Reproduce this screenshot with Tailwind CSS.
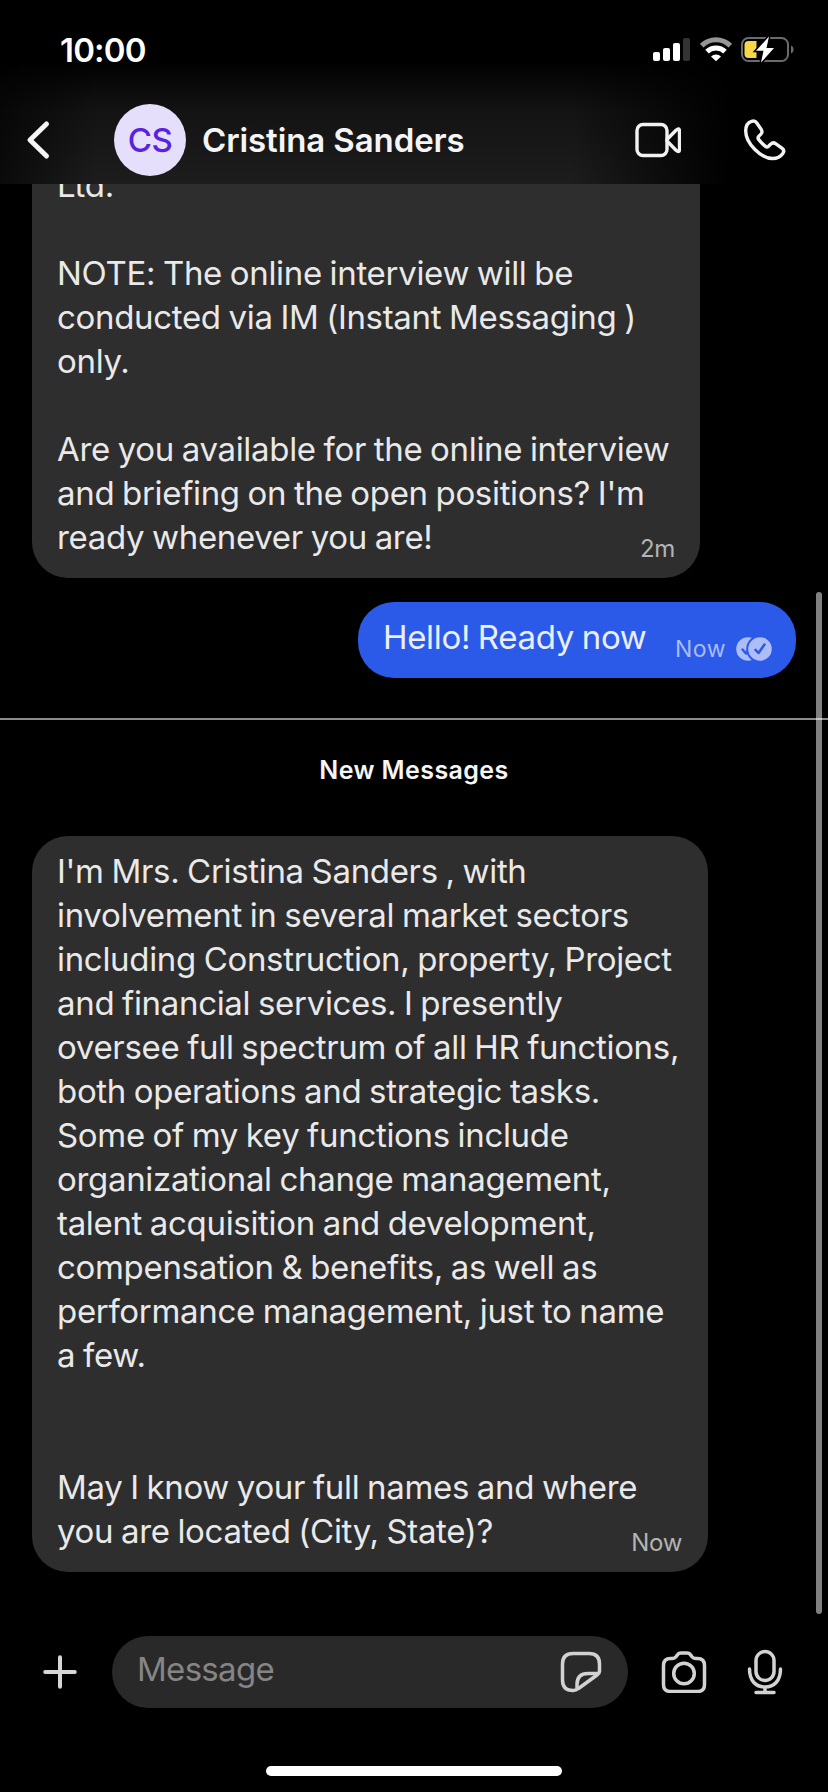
<!DOCTYPE html>
<html lang="en">
<head>
  <meta charset="UTF-8" />
  <meta name="viewport" content="width=device-width, initial-scale=1.0"/>
  <title>Cristina Sanders</title>
  <script src="https://cdn.jsdelivr.net/npm/@tailwindcss/browser@4"></script>
</head>
<body class="bg-black overflow-hidden font-['Inter',sans-serif] text-[#e9e9e9]">
  <div class="relative w-[828px] h-[1792px] flex flex-col overflow-hidden">

    <!-- Header -->
    <header class="h-[184px] shrink-0 bg-[linear-gradient(to_right,rgba(0,0,0,0.65),transparent_100px,transparent_570px,#000_730px),linear-gradient(to_bottom,#000_60px,#131313_110px,#1d1d1d_184px)]">
      <div class="h-[104px] flex justify-between pl-[60px] pr-[33px]">
        <div class="pt-[30px] text-[33px] leading-[40px] font-semibold text-white tracking-[-0.8px]">10:00</div>
        <div class="pt-[36px] flex items-start">
          <svg class="w-[38px] h-[28px]" viewBox="0 0 38 28" fill="#fff">
            <rect x="0" y="16" width="7" height="9" rx="2"/>
            <rect x="10" y="12" width="7" height="13" rx="2"/>
            <rect x="20" y="7" width="7" height="18" rx="2"/>
            <rect x="30" y="2" width="7" height="23" rx="2" fill="#333"/>
          </svg>
          <svg class="w-[32px] h-[28px] ml-[9px]" viewBox="0 0 32 28" fill="none" stroke-width="5">
            <path d="M1.7 9.7a20.2 20.2 0 0 1 28.6 0" stroke="#969696"/>
            <path d="M7 15.6a12.8 12.8 0 0 1 18 0" stroke="#fff"/>
            <path d="M11 20.4a7.2 7.2 0 0 1 10 0l-5 4.8z" fill="#fff"/>
          </svg>
          <svg class="w-[54px] h-[28px] ml-[9px]" viewBox="0 0 54 28" fill="none">
            <rect x="1" y="2" width="46" height="23" rx="6.5" stroke="#6b6b6b" stroke-width="2"/>
            <path d="M50 9.500c3.400 1.300 3.400 6.700 0 8z" fill="#6b6b6b"/>
            <path d="M7.500 5H15.500v17H7.500a4 4 0 0 1-4-4V9a4 4 0 0 1 4-4z" fill="#f8d64a"/>
            <path d="M28 .5 15 14.700h7.500L20 26.500l13-14.500h-7.500z" fill="#fff" stroke="#000" stroke-width="3" paint-order="stroke"/>
          </svg>
        </div>
      </div>
      <div class="h-[72px] flex items-center pl-[25px] pr-[42px]">
        <svg class="w-[26px] h-[40px]" viewBox="0 0 26 40" fill="none" stroke="#f5f5f5" stroke-width="5" stroke-linecap="round" stroke-linejoin="round">
          <path d="M21.500 4 5 20l16.500 16"/>
        </svg>
        <div class="ml-[63px] w-[72px] h-[72px] pt-0.5 rounded-full bg-[#e6dffb] flex items-center justify-center text-[33px] font-medium text-[#5a22e0] tracking-[-0.5px]">CS</div>
        <div class="ml-[16px] text-[33px] leading-[40px] font-semibold text-[#f5f5f5] tracking-[-0.1px]">Cristina Sanders</div>
        <svg class="ml-auto w-[46px] h-[36px]" viewBox="0 0 46 36" fill="none" stroke="#f2f2f2" stroke-width="3.4" stroke-linejoin="round">
          <rect x="2" y="2.500" width="30" height="31" rx="6"/>
          <path d="M32 17.500 41 8.200q3.500-3 3.500 1v18q0 4-3.500 1L32 19z"/>
        </svg>
        <svg class="ml-[63px] w-[42px] h-[42px]" viewBox="0 0 42 42" fill="none" stroke="#f2f2f2" stroke-width="3.4" stroke-linejoin="round">
          <path d="M7.500 2.400C4 3.500 1.700 7 1.700 12c0 12 15 27.500 27 27.500 4.800 0 8-2 10.300-5.300 1.200-1.900.8-3.600-.8-4.800l-6.600-4.700c-1.700-1.200-3.400-1-4.800.4l-2.300 2.200c-1 .9-2 .9-3 .1-2.600-2-4.900-4.400-6.900-7-.8-1.100-.8-2 .1-3l2.200-2.300c1.300-1.400 1.400-3 .3-4.700L12.800 4c-1.200-1.800-3.200-2.400-5.300-1.600z"/>
        </svg>
      </div>
    </header>

    <!-- Conversation -->
    <main class="flex flex-col h-[1388px] shrink-0 text-[33px] leading-[44px] tracking-[-0.32px] [word-spacing:-1.2px]">
      <div class="ml-[32px] w-[668px] h-[394px] shrink-0 overflow-hidden flex flex-col justify-end rounded-b-[36px] bg-[#2e2e2e] pl-[25px] pr-[25px] pb-[19px] whitespace-nowrap">
        <p>Ltd.<br><br>NOTE: The online interview will be<br>conducted via IM (Instant Messaging )<br>only.<br><br>Are you available for the online interview<br>and briefing on the open positions? I'm</p>
        <div class="flex justify-between items-end">
          <p>ready whenever you are!</p>
          <span class="-mb-1 text-[24px] leading-[28px] text-[#b3b3b3]">2m</span>
        </div>
      </div>

      <div class="mt-[24px] mr-[32px] self-end w-[438px] h-[76px] shrink-0 rounded-[36px] bg-[#2c5ae8] pt-[13px] pl-[25px] pr-[24px] flex items-start justify-between whitespace-nowrap text-[#e9eefc]">
        <p>Hello! Ready now</p>
        <div class="mt-[20px] flex items-center text-[23px] leading-[28px] text-[#a9bcf6]">
          <span class="tracking-[0.5px]">Now</span>
          <svg class="ml-[10px] w-[36px] h-[24px]" viewBox="0 0 36 24" fill="none" stroke-width="2.500" stroke-linecap="round" stroke-linejoin="round">
            <circle cx="12" cy="12" r="11.800" fill="#adbdf7"/>
            <path d="M6.500 12.500 10 16.500l6-9" stroke="#2c5ae8"/>
            <circle cx="24" cy="12" r="12.800" fill="#adbdf7" stroke="#2c5ae8" stroke-width="2"/>
            <path d="M19.500 12.800 22.500 16l6-8.500" stroke="#2c5ae8"/>
          </svg>
        </div>
      </div>

      <div class="mt-[40px] h-[2px] shrink-0 bg-[#8c8c8c]"></div>
      <div class="h-[116px] shrink-0 pt-[32px] text-center text-[25px] leading-[36px] font-semibold text-[#f5f5f5] tracking-[0.4px] [word-spacing:0px]">New Messages</div>

      <div class="ml-[32px] w-[676px] h-[736px] shrink-0 rounded-[36px] bg-[#2e2e2e] pt-[13px] pl-[25px] pr-[26px] whitespace-nowrap">
        <p>I'm Mrs. Cristina Sanders , with<br>involvement in several market sectors<br>including Construction, property, Project<br>and financial services. I presently<br>oversee full spectrum of all HR functions,<br>both operations and strategic tasks.<br>Some of my key functions include<br>organizational change management,<br>talent acquisition and development,<br>compensation &amp; benefits, as well as<br>performance management, just to name<br>a few.<br><br><br>May I know your full names and where</p>
        <div class="flex justify-between items-end">
          <p>you are located (City, State)?</p>
          <span class="-mb-1 text-[24px] leading-[28px] text-[#b3b3b3]">Now</span>
        </div>
      </div>
    </main>

    <!-- Composer -->
    <footer class="flex flex-col items-center pt-[64px]">
      <div class="w-full h-[72px] flex items-center pl-[42px] pr-[45px]">
        <svg class="w-[36px] h-[36px]" viewBox="0 0 36 36" fill="none" stroke="#d6d6d6" stroke-width="4" stroke-linecap="round">
          <path d="M18 3.200v29.600M3.200 18h29.600"/>
        </svg>
        <div class="ml-[34px] w-[516px] h-[72px] rounded-full bg-[#292929] flex items-center justify-between pl-[25px] pr-[26px]">
          <span class="pb-[6px] text-[33px] leading-[44px] text-[#858585] tracking-[-0.7px]">Message</span>
          <svg class="w-[42px] h-[42px]" viewBox="0 0 42 42" fill="none" stroke="#d2d2d2" stroke-width="3.5" stroke-linejoin="round">
            <path d="M39.500 20.500V13Q39.500 2.500 29 2.500H13Q2.500 2.500 2.500 13v16Q2.500 39.500 13 39.500q3 0 5.500-2L37 24q2.500-1.700 2.500-3.500z"/>
            <path d="M17 38.500v-5Q17 22.500 28 22.500h11"/>
          </svg>
        </div>
        <svg class="ml-[33px] w-[46px] h-[42px]" viewBox="0 0 46 42" fill="none" stroke="#d2d2d2" stroke-width="3.5" stroke-linejoin="round">
          <path d="M9.500 7.500h2q2.200 0 3.500-1.700l1.600-2.200Q17.700 2 20 2h6q2.300 0 3.400 1.600l1.600 2.200q1.300 1.700 3.500 1.700h2Q43.500 7.500 43.500 14.500v19q0 7-7 7H9.500Q2.500 40.500 2.500 33.500V14.500Q2.500 7.500 9.500 7.500z"/>
          <circle cx="23" cy="22.500" r="10.300"/>
        </svg>
        <svg class="ml-[40px] w-[36px] h-[46px]" viewBox="0 0 36 46" fill="none" stroke="#d2d2d2" stroke-width="3.5" stroke-linecap="round">
          <rect x="9" y="2.500" width="18" height="29" rx="9"/>
          <path d="M2.500 20c0 12 6.500 18 15.500 18s15.500-6 15.500-18M18 38v5M9 43.500h18"/>
        </svg>
      </div>
      <div class="mt-[58px] w-[296px] h-[10px] rounded-full bg-white"></div>
    </footer>

    <!-- Scroll indicator -->
    <div class="absolute left-[816px] top-[592px] w-[6px] h-[1022px] rounded-full bg-white/50"></div>
  </div>
</body>
</html>
